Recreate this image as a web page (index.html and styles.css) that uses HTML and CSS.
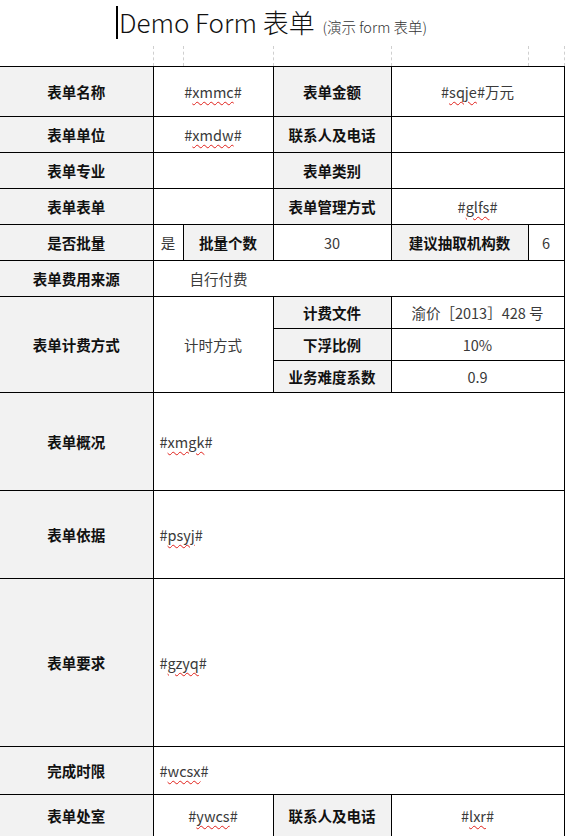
FILE: index.html
```html
<!DOCTYPE html>
<html lang="zh">
<head>
<meta charset="utf-8">
<title>Demo Form 表单</title>
<link rel="stylesheet" href="styles.css">
</head>
<body>
<div class="title"><span class="caret"></span>Demo Form 表单 <span class="sub">(演示 form 表单)</span></div>
<table class="form">
  <colgroup>
    <col class="c1"><col class="c2"><col class="c3"><col class="c4"><col class="c5"><col class="c6">
  </colgroup>
  <tr class="grid"><td></td><td></td><td></td><td></td><td></td><td></td></tr>
  <tr class="h50">
    <th>表单名称</th><td colspan="2">#<span class="sp">xmmc</span>#</td>
    <th>表单金额</th><td colspan="2">#<span class="sp">sqje</span>#万元</td>
  </tr>
  <tr class="h36">
    <th>表单单位</th><td colspan="2">#<span class="sp">xmdw</span>#</td>
    <th>联系人及电话</th><td colspan="2"></td>
  </tr>
  <tr class="h36">
    <th>表单专业</th><td colspan="2"></td>
    <th>表单类别</th><td colspan="2"></td>
  </tr>
  <tr class="h36">
    <th>表单表单</th><td colspan="2"></td>
    <th>表单管理方式</th><td colspan="2">#<span class="sp">glfs</span>#</td>
  </tr>
  <tr class="h36">
    <th>是否批量</th><td class="narrow">是</td><th>批量个数</th>
    <td>30</td><th>建议抽取机构数</th><td>6</td>
  </tr>
  <tr class="h36">
    <th>表单费用来源</th><td colspan="5" class="src">自行付费</td>
  </tr>
  <tr class="h32">
    <th rowspan="3">表单计费方式</th><td rowspan="3" colspan="2">计时方式</td>
    <th>计费文件</th><td colspan="2">渝价［2013］428 号</td>
  </tr>
  <tr class="h32 inner">
    <th>下浮比例</th><td colspan="2">10%</td>
  </tr>
  <tr class="h32 inner">
    <th>业务难度系数</th><td colspan="2">0.9</td>
  </tr>
  <tr class="h98">
    <th>表单概况</th><td colspan="5" class="left">#<span class="sp">xmgk</span>#</td>
  </tr>
  <tr class="h88">
    <th>表单依据</th><td colspan="5" class="left">#<span class="sp">psyj</span>#</td>
  </tr>
  <tr class="h168">
    <th>表单要求</th><td colspan="5" class="left">#<span class="sp">gzyq</span>#</td>
  </tr>
  <tr class="h48">
    <th>完成时限</th><td colspan="5" class="left">#<span class="sp">wcsx</span>#</td>
  </tr>
  <tr class="h42">
    <th>表单处室</th><td colspan="2">#<span class="sp">ywcs</span>#</td>
    <th>联系人及电话</th><td colspan="2">#<span class="sp">lxr</span>#</td>
  </tr>
</table>
</body>
</html>
```
FILE: styles.css
```css
html, body {
  margin: 0;
  padding: 0;
  background: #fff;
  overflow: hidden;
}
body {
  font-family: "Noto Sans CJK SC", "Noto Sans", sans-serif;
  color: #000;
}
.title {
  height: 46px;
  line-height: 44px;
  text-align: center;
  font-size: 26px;
  font-weight: 300;
  color: #111;
  padding-right: 22px;
  white-space: nowrap;
}
.caret {
  display: inline-block;
  width: 2px;
  height: 33px;
  background: #000;
  vertical-align: -6px;
  margin-right: 1px;
}
.sub {
  font-size: 14.5px;
  color: #333;
  margin-left: 2px;
}
.form {
  border-collapse: collapse;
  table-layout: fixed;
  width: 564px;
}
.c1 { width: 153px; }
.c2 { width: 30px; }
.c3 { width: 90px; }
.c4 { width: 118px; }
.c5 { width: 137px; }
.c6 { width: 36px; }
.form th,
.form td {
  border: 1px solid #000;
  padding: 0 3px;
  font-size: 14.5px;
  text-align: center;
  vertical-align: middle;
  white-space: nowrap;
}
.form th {
  background: #f2f2f2;
  font-weight: 700;
  color: #111;
}
.form td {
  font-weight: 400;
  color: #3a3a3a;
}
.form tr:not(.inner) > :first-child {
  border-left: none;
}
.form .grid td {
  border: 1px dashed #cfcfcf;
  border-top: none;
  height: 20px;
  padding: 0;
}
.form .narrow { padding: 0; }
.form .left {
  text-align: left;
  padding-left: 6px;
}
.form .src {
  text-align: left;
  padding-left: 36px;
}
.sp {
  text-decoration: underline wavy #e0201a;
  text-decoration-thickness: 1px;
  text-underline-offset: 3px;
}
.h50 > * { height: 49px; }
.h36 > * { height: 35px; }
.h32 > * { height: 31px; }
.h98 > * { height: 97px; }
.h88 > * { height: 87px; }
.h168 > * { height: 167px; }
.h48 > * { height: 47px; }
.h42 > * { height: 41px; }
```
